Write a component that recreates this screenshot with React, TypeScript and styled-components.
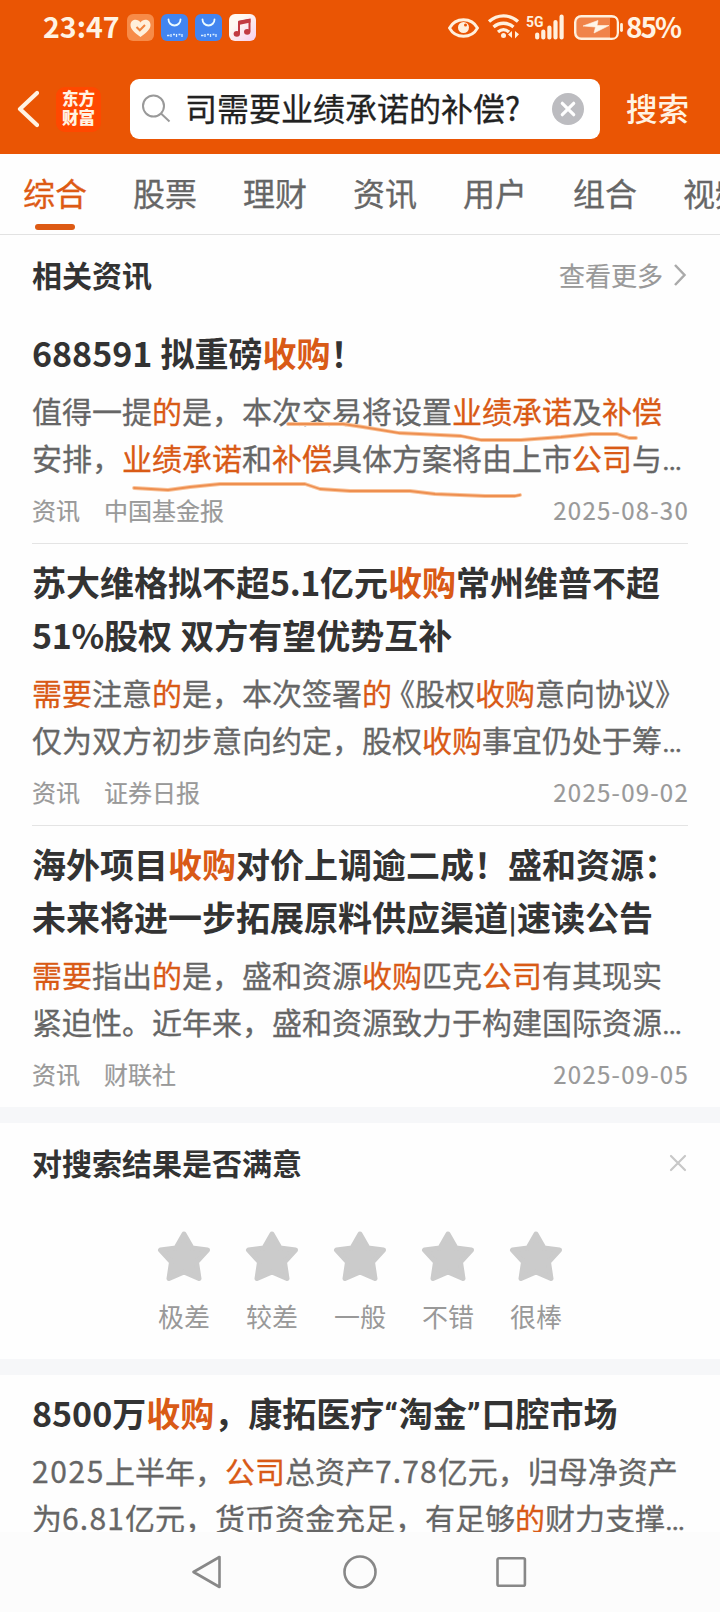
import React from 'react';
import styled, { createGlobalStyle, css } from 'styled-components';

const Global = createGlobalStyle`
  * { box-sizing: border-box; }
  html, body { margin: 0; background: #fff; }
  body {
    font-family: "Noto Sans CJK SC", sans-serif;
    font-kerning: none;
    color: #333;
  }
  svg { display: block; flex: none; }
`;

const Screen = styled.div`
  width: 720px;
  height: 1612px;
  display: flex;
  flex-direction: column;
  overflow: hidden;
  background: #fefefe;
`;

const Header = styled.header`
  flex: none;
  height: 154px;
  background: #ea5504;
  color: #fff3e3;
`;

const StatusBar = styled.div`
  height: 54px;
  display: flex;
  align-items: center;
  padding: 0 38px 0 43px;
`;

const Clock = styled.span`
  width: 84px;
  padding-bottom: 2px;
  font-size: 28.5px;
  font-weight: 700;
  line-height: 52px;
  white-space: nowrap;
`;

const AppBadges = styled.div`
  display: flex;
  gap: 7px;
`;

const StatusIcons = styled.div`
  margin-left: auto;
  display: flex;
  align-items: center;
`;

const Battery = styled.span`
  width: 56px;
  margin-left: 2px;
  padding-bottom: 2px;
  font-size: 28px;
  font-weight: 700;
  letter-spacing: -2px;
  line-height: 52px;
  white-space: nowrap;
`;

const SearchRow = styled.div`
  height: 110px;
  display: flex;
  align-items: center;
  padding: 0 0 0 17px;
`;

const Logo = styled.div`
  width: 45px;
  height: 45px;
  margin-left: 17px;
  padding-top: 2px;
  border-radius: 9px;
  background: #ff4800;
  font-size: 16.5px;
  font-weight: 900;
  line-height: 19.5px;
  text-align: center;
`;

const SearchBox = styled.div`
  width: 470px;
  height: 60px;
  margin-left: 29px;
  padding: 0 16px 0 11px;
  display: flex;
  align-items: center;
  border-radius: 9px;
  background: #fff;
  color: #222;
`;

const Query = styled.span`
  flex: 1;
  margin-left: 14px;
  padding-bottom: 3px;
  font-size: 32px;
  line-height: 53px;
  white-space: nowrap;
  -webkit-text-stroke: 0.3px currentColor;
`;

const SearchAction = styled.span`
  margin-left: 26px;
  padding-bottom: 3px;
  font-size: 31.5px;
  font-weight: 500;
  line-height: 53px;
`;

const Tabs = styled.nav`
  flex: none;
  height: 81px;
  display: flex;
  gap: 46px;
  padding-left: 23px;
  border-bottom: 1px solid #e2e2e2;
`;

const Tab = styled.div<{ $active?: boolean }>`
  flex: none;
  width: 64px;
  display: flex;
  flex-direction: column;
  align-items: center;
  font-size: 32px;
  line-height: 76px;
  -webkit-text-stroke: 0.3px currentColor;
  color: ${p => (p.$active ? '#dd5a14' : '#666')};
  ${p =>
    p.$active &&
    css`
      &::after {
        content: '';
        width: 40px;
        height: 6px;
        margin-top: -6px;
        border-radius: 3px;
        background: #dd5a14;
      }
    `}
`;

const Content = styled.main`
  flex: 1;
  min-height: 0;
  overflow: hidden;
`;

const SectionHead = styled.div`
  height: 80px;
  padding: 0 32px;
  display: flex;
  align-items: center;
  justify-content: space-between;
`;

const SectionTitle = styled.h2`
  margin: 0 0 3px;
  font-size: 30px;
  font-weight: 700;
  line-height: 44px;
`;

const More = styled.span`
  display: flex;
  align-items: center;
  gap: 10px;
  font-size: 26px;
  line-height: 44px;
  color: #999;
  padding-right: 1px;
  -webkit-text-stroke: 0.2px currentColor;
`;

const Article = styled.article<{ $divided?: boolean }>`
  position: relative;
  margin: 0 32px;
  padding: 11px 0 17px;
  ${p => p.$divided && 'border-bottom: 1px solid #e4e4e4;'}
`;

const Title = styled.h3`
  margin: 0;
  font-size: 34px;
  font-weight: 700;
  line-height: 53px;
  word-spacing: 0.5px;
`;

const Snippet = styled.p`
  margin: 8px 0 0;
  font-size: 30px;
  line-height: 47px;
  color: #666;
  -webkit-text-stroke: 0.3px currentColor;
`;

const Line = styled.span`
  display: block;
  white-space: nowrap;
`;

const Hit = styled.em`
  font-style: normal;
  color: #d95a16;
`;

const Num = styled.span<{ $gap: number }>`
  letter-spacing: ${p => p.$gap}px;
`;

const Latin = styled.span<{ $gap?: number }>`
  font-family: Roboto, sans-serif;
  line-height: 0;
  letter-spacing: ${p => p.$gap ?? 0}px;
`;

const Pipe = styled.span`
  display: inline-block;
  width: 9px;
  font-size: 26px;
  line-height: 0;
  vertical-align: 2px;
  text-align: center;
`;

const OpenMark = styled.span`
  margin-left: -7px;
`;

const Meta = styled.div`
  margin-top: 12px;
  height: 33px;
  display: flex;
  align-items: center;
  gap: 24px;
  font-size: 24px;
  line-height: 33px;
  color: #999;
  -webkit-text-stroke: 0.2px currentColor;
`;

const DateText = styled.span`
  margin-left: auto;
  margin-right: -1px;
  letter-spacing: 1.25px;
`;

const Marker = styled.svg`
  position: absolute;
  left: 88px;
  top: 98px;
`;

const Band = styled.div`
  height: 16px;
  background: #f6f7f9;
`;

const Feedback = styled.section`
  height: 236px;
`;

const Stars = styled.div`
  display: flex;
  justify-content: center;
  gap: 34px;
  padding-top: 27px;
`;

const Rating = styled.div`
  width: 54px;
  display: flex;
  flex-direction: column;
  align-items: center;
  gap: 15px;
  font-size: 26px;
  line-height: 38px;
  color: #999;
  white-space: nowrap;
`;

const NavBar = styled.footer`
  flex: none;
  height: 80px;
  display: flex;
  justify-content: center;
  align-items: center;
  gap: 119px;
  background: #fcfcfc;
`;

const BagBadge = () => (
  <svg width="27" height="27" viewBox="0 0 27 27">
    <rect width="27" height="27" rx="6" fill="#4285f0" />
    <path d="M7.500 5.500a6 6 0 0 0 12 0" fill="none" stroke="#eafaff" strokeWidth="1.800" strokeLinecap="round" />
    <path d="M6 21.500h2.500M10 20v3M12 20.500h2M15.500 20v3M17.500 20.500h2M21 20v3" stroke="#d8edff" strokeWidth="1.300" />
  </svg>
);

const Star = () => (
  <svg width="54" height="52" viewBox="0 0 54 52">
    <path
      d="M27 4 35 18 50.500 20 39.500 32 42 48.500 27 42 12 48.500 14.500 32 3.500 20 19 18Z"
      fill="#cbcbcb"
      stroke="#cbcbcb"
      strokeWidth="5"
      strokeLinejoin="round"
    />
  </svg>
);

const Dots = () => <Latin>…</Latin>;

const tabs = ['综合', '股票', '理财', '资讯', '用户', '组合', '视频'];
const ratings = ['极差', '较差', '一般', '不错', '很棒'];

export default function App() {
  return (
    <Screen lang="zh-CN">
      <Global />
      <Header>
        <StatusBar>
          <Clock>23:47</Clock>
          <AppBadges>
            <svg width="27" height="27" viewBox="0 0 27 27">
              <rect width="27" height="27" rx="6" fill="#f78b48" />
              <path d="M13.500 23C7 18.500 3.500 15 3.500 11c0-5.500 7-7 10-2.500 3-4.500 10-3 10 2.500 0 4-3.500 7.500-10 12Z" fill="#fff0db" />
              <path d="m9.500 13 3.300 3.300 5.200-5.300" fill="none" stroke="#f0833d" strokeWidth="2" />
            </svg>
            <BagBadge />
            <BagBadge />
            <svg width="27" height="27" viewBox="0 0 27 27">
              <defs>
                <linearGradient id="music" x1="0" y1="0" x2="1" y2="1">
                  <stop offset="0.3" stopColor="#fffaf2" />
                  <stop offset="1" stopColor="#f7cdee" />
                </linearGradient>
              </defs>
              <rect width="27" height="27" rx="6" fill="url(#music)" />
              <path d="M10 19.500V8l10.500-2v11.500" fill="none" stroke="#c23b42" strokeWidth="2" />
              <path d="M9.500 6.800 21.500 4.500v4L9.500 11z" fill="#c23b42" />
              <ellipse cx="7.800" cy="19.800" rx="3.200" ry="2.900" fill="#c23b42" />
              <ellipse cx="18.200" cy="17.800" rx="3.200" ry="2.900" fill="#c23b42" />
            </svg>
          </AppBadges>
          <StatusIcons>
            <svg width="177" height="32" viewBox="447 11 177 32" fill="none" stroke="#fff0dd">
              <path d="M449.500 28c6-11 22-11 28 0-6 11-22 11-28 0Z" strokeWidth="2.800" />
              <circle cx="463.500" cy="27.500" r="5.500" fill="#fff0dd" stroke="none" />
              <circle cx="465.500" cy="25" r="1.500" fill="#ea5504" stroke="none" />
              <g strokeWidth="3.300">
                <path d="M489 21.500c8.500-7.500 20.500-7.500 29 0" />
                <path d="M493.500 27c6-5 14-5 20 0" />
                <path d="M498 32c3.500-3 7.500-3 11 0" />
              </g>
              <circle cx="503.500" cy="35.500" r="2.500" fill="#fff0dd" stroke="none" />
              <path d="m512 31-4 3.500 4 3.500ZM515 31v7.500l4-4.200Z" fill="#fff0dd" stroke="none" />
              <text x="526" y="27" fill="#fff0dd" stroke="none" fontSize="15.500" fontWeight="700" fontFamily="Roboto, sans-serif" textLength="17.500" lengthAdjust="spacingAndGlyphs">5G</text>
              <g strokeWidth="4.200" strokeLinecap="round">
                <path d="M537.200 34.500v3M543.300 31.500v6M549.400 27.500v10M555.500 22v15.500M561.600 16.500v21" />
              </g>
              <rect x="575.200" y="16.200" width="42.600" height="22.600" rx="6" fill="#f08349" strokeWidth="2.400" />
              <path d="M610 18h4.500q2 1 2 3v13q0 2.500-2 3.500H610z" fill="#ea5504" stroke="none" />
              <path d="m583 26 15-5.500-1 5h12l-15 7.500 1.500-6z" fill="#fff5e8" stroke="#fff5e8" strokeWidth="0.600" />
              <path d="M621.500 24.500v6" strokeWidth="2.800" strokeLinecap="round" />
            </svg>
            <Battery>85%</Battery>
          </StatusIcons>
        </StatusBar>
        <SearchRow>
          <svg width="22" height="38" viewBox="0 0 22 38" fill="none" stroke="#fff3e3" strokeWidth="4.200" strokeLinecap="round" strokeLinejoin="round">
            <path d="M20 3 3 19l17 16" />
          </svg>
          <Logo>
            东方
            <br />
            财富
          </Logo>
          <SearchBox>
            <svg width="30" height="30" viewBox="0 0 30 30" fill="none" stroke="#999" strokeWidth="2">
              <circle cx="12.500" cy="12" r="10.500" />
              <path d="m20 19.500 8.500 8" />
            </svg>
            <Query>司需要业绩承诺的补偿?</Query>
            <svg width="32" height="32" viewBox="0 0 32 32">
              <circle cx="16" cy="16" r="16" fill="#bcbcc0" />
              <path d="m10.300 10.300 11.400 11.400m0-11.400L10.300 21.700" stroke="#fff" strokeWidth="3.200" strokeLinecap="round" />
            </svg>
          </SearchBox>
          <SearchAction>搜索</SearchAction>
        </SearchRow>
      </Header>

      <Tabs>
        {tabs.map((t, i) => (
          <Tab key={t} $active={i === 0}>{t}</Tab>
        ))}
      </Tabs>

      <Content>
        <SectionHead>
          <SectionTitle>相关资讯</SectionTitle>
          <More>
            查看更多
            <svg width="14" height="22" viewBox="0 0 14 22" fill="none" stroke="#aaa" strokeWidth="2.500">
              <path d="m2 1 9.500 10L2 21" />
            </svg>
          </More>
        </SectionHead>

        <Article $divided>
          <Title>
            <Line>688591 拟重磅<Hit>收购</Hit>！</Line>
          </Title>
          <Snippet>
            <Line>值得一提<Hit>的</Hit>是，本次交易将设置<Hit>业绩承诺</Hit>及<Hit>补偿</Hit></Line>
            <Line>安排，<Hit>业绩承诺</Hit>和<Hit>补偿</Hit>具体方案将由上市<Hit>公司</Hit>与<Dots /></Line>
          </Snippet>
          <Meta>
            <span>资讯</span>
            <span>中国基金报</span>
            <DateText>2025-08-30</DateText>
          </Meta>
          <Marker width="530" height="90" viewBox="120 413 530 90" fill="none" strokeLinecap="round" strokeLinejoin="round">
            <g stroke="#f9c39a" strokeWidth="3.800">
              <path d="M288 424h55l20 3 36 6 62 3 20 4h40l40-3 30-3h26l12 4h7" />
              <path d="M134 488l34 2 22-3 30-3h85l15 5 30 2h60l25 3 50 2h30l5-1" />
            </g>
            <g stroke="#ee8f50" strokeWidth="1.800">
              <path d="M288 424h55l20 3 36 6 62 3 20 4h40l40-3 30-3h26l12 4h7" />
              <path d="M134 488l34 2 22-3 30-3h85l15 5 30 2h60l25 3 50 2h30l5-1" />
            </g>
          </Marker>
        </Article>

        <Article $divided>
          <Title>
            <Line>苏大维格拟不超<Num $gap={-0.4}>5.1</Num>亿元<Hit>收购</Hit>常州维普不超</Line>
            <Line><Num $gap={-0.3}>51%</Num>股权 双方有望优势互补</Line>
          </Title>
          <Snippet>
            <Line><Hit>需要</Hit>注意<Hit>的</Hit>是，本次签署<Hit>的</Hit><OpenMark>《</OpenMark>股权<Hit>收购</Hit>意向协议》</Line>
            <Line>仅为双方初步意向约定，股权<Hit>收购</Hit>事宜仍处于筹<Dots /></Line>
          </Snippet>
          <Meta>
            <span>资讯</span>
            <span>证券日报</span>
            <DateText>2025-09-02</DateText>
          </Meta>
        </Article>

        <Article>
          <Title>
            <Line>海外项目<Hit>收购</Hit>对价上调逾二成！盛和资源：</Line>
            <Line>未来将进一步拓展原料供应渠道<Pipe>|</Pipe>速读公告</Line>
          </Title>
          <Snippet>
            <Line><Hit>需要</Hit>指出<Hit>的</Hit>是，盛和资源<Hit>收购</Hit>匹克<Hit>公司</Hit>有其现实</Line>
            <Line>紧迫性。近年来，盛和资源致力于构建国际资源<Dots /></Line>
          </Snippet>
          <Meta>
            <span>资讯</span>
            <span>财联社</span>
            <DateText>2025-09-05</DateText>
          </Meta>
        </Article>

        <Band />
        <Feedback>
          <SectionHead>
            <SectionTitle>对搜索结果是否满意</SectionTitle>
            <svg width="20" height="20" viewBox="0 0 20 20" stroke="#c8c8c8" strokeWidth="2.200" strokeLinecap="round">
              <path d="m3 3 14 14M17 3 3 17" />
            </svg>
          </SectionHead>
          <Stars>
            {ratings.map(r => (
              <Rating key={r}>
                <Star />
                {r}
              </Rating>
            ))}
          </Stars>
        </Feedback>
        <Band />

        <Article>
          <Title>
            <Line>8500万<Hit>收购</Hit>，康拓医疗<Latin $gap={0.8}>“</Latin>淘金<Latin $gap={0.8}>”</Latin>口腔市场</Line>
          </Title>
          <Snippet>
            <Line><Num $gap={1.6}>2025</Num>上半年，<Hit>公司</Hit>总资产<Num $gap={1.1}>7.78</Num>亿元，归母净资产</Line>
            <Line>为<Num $gap={1.2}>6.81</Num>亿元，货币资金充足，有足够<Hit>的</Hit>财力支撑<Dots /></Line>
          </Snippet>
        </Article>
      </Content>

      <NavBar>
        <svg width="32" height="36" viewBox="0 0 32 36" fill="none" stroke="#888" strokeWidth="2.600" strokeLinejoin="round">
          <path d="M27.500 3v30L1.500 18Z" />
        </svg>
        <svg width="34" height="34" viewBox="0 0 34 34" fill="none" stroke="#888" strokeWidth="2.600">
          <circle cx="17" cy="17" r="15.500" />
        </svg>
        <svg width="32" height="32" viewBox="0 0 32 32" fill="none" stroke="#888" strokeWidth="2.600">
          <rect x="1.500" y="2.300" width="27.400" height="27.400" rx="1.500" />
        </svg>
      </NavBar>
    </Screen>
  );
}
